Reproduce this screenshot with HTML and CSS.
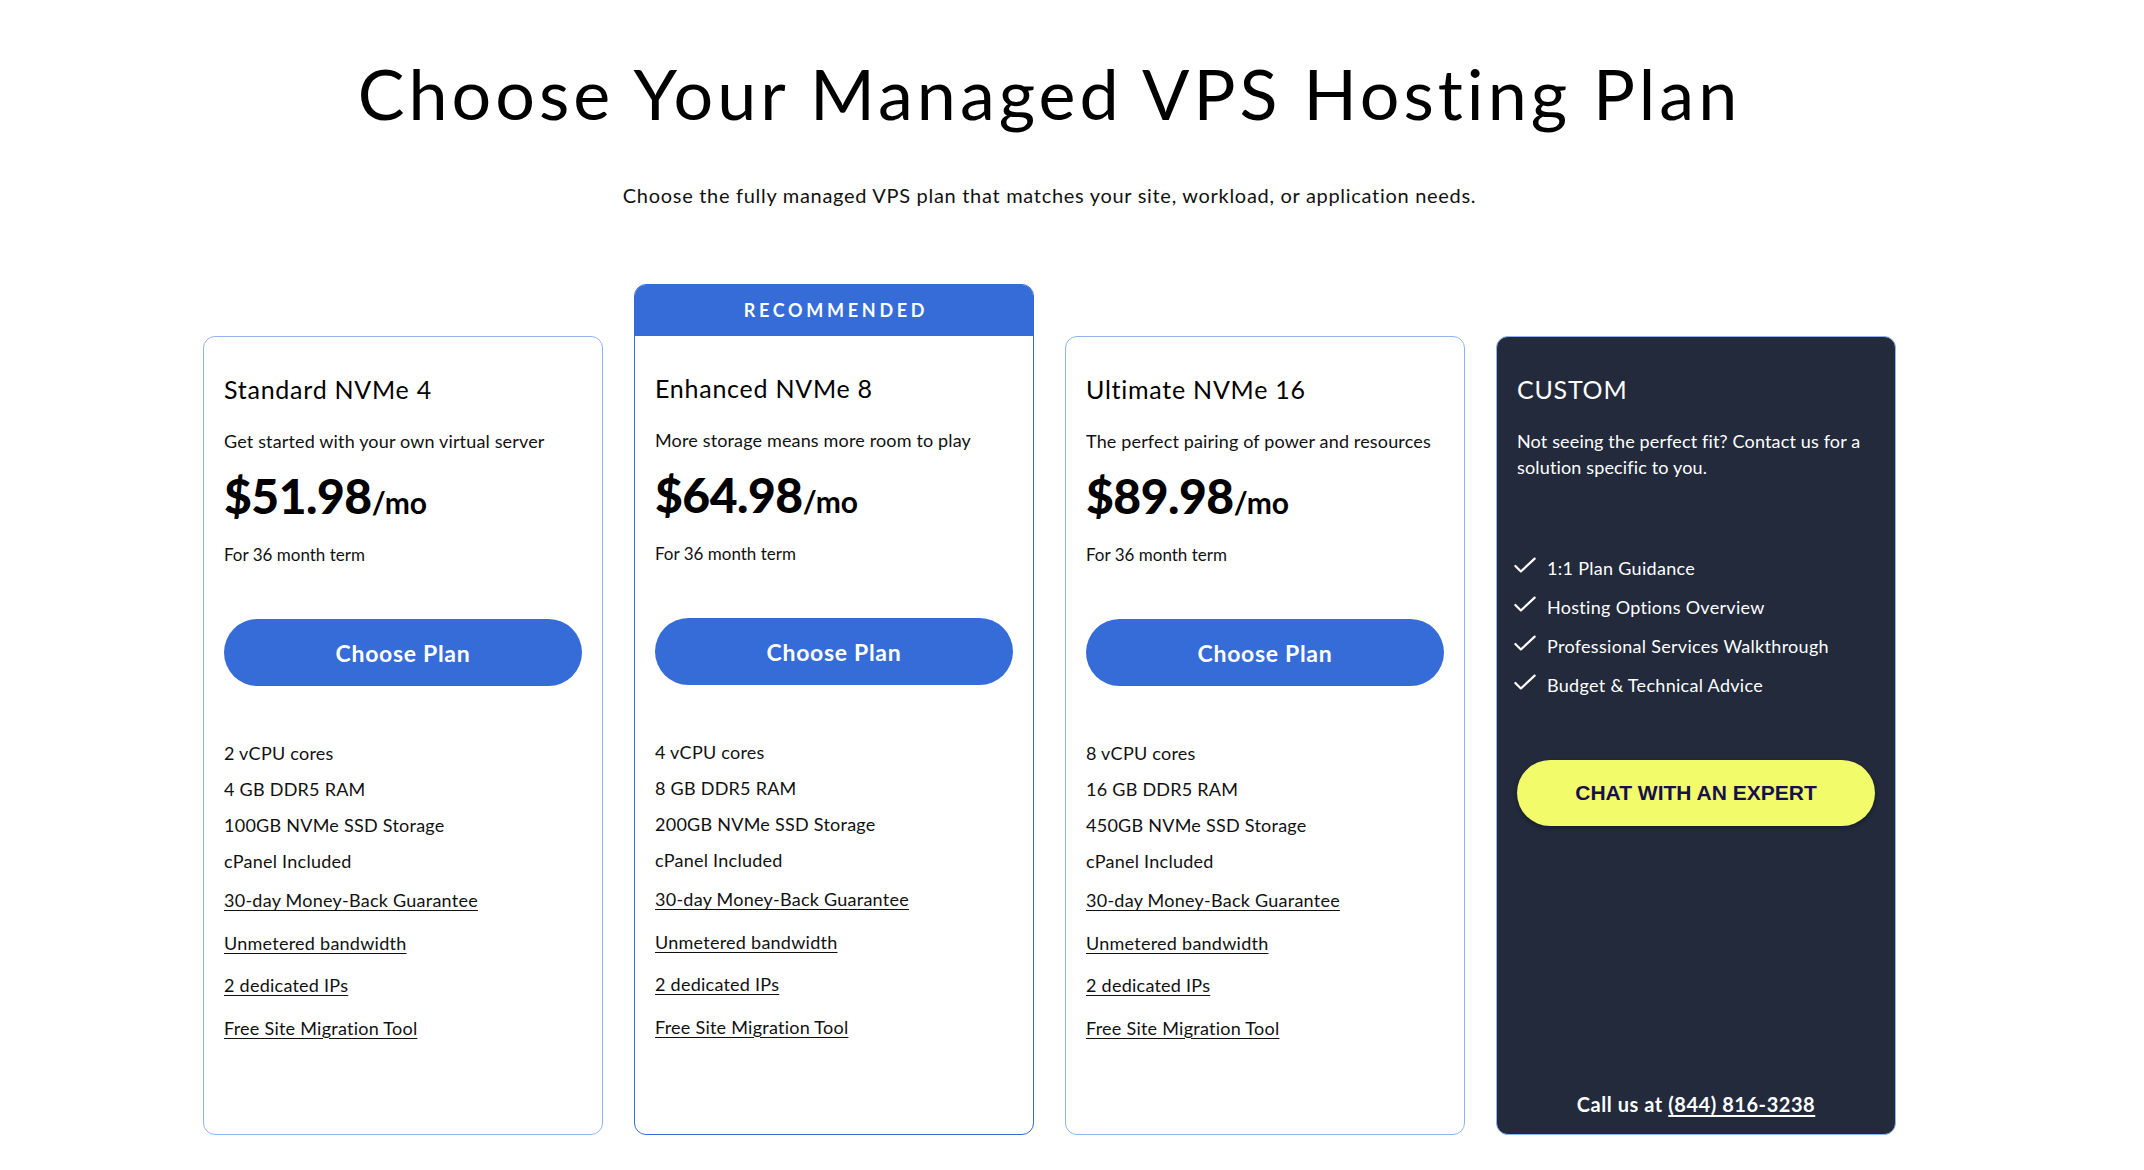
FILE: index.html
```html
<!DOCTYPE html>
<html lang="en">
<head>
<meta charset="utf-8">
<title>Choose Your Managed VPS Hosting Plan</title>
<link rel="stylesheet" href="styles.css">
</head>
<body>
<main class="page">
  <header class="intro">
    <h1 class="intro-title">Choose Your Managed VPS Hosting Plan</h1>
    <p class="intro-sub">Choose the fully managed VPS plan that matches your site, workload, or application needs.</p>
  </header>

  <section class="plans">
    <article class="card">
      <div class="card-body">
        <h2 class="plan-name">Standard NVMe 4</h2>
        <p class="plan-desc">Get started with your own virtual server</p>
        <p class="plan-price"><span class="amount">$51.98</span><span class="per">/mo</span></p>
        <p class="plan-term">For 36 month term</p>
        <a class="btn-plan" href="#">Choose Plan</a>
        <ul class="features">
          <li>2 vCPU cores</li>
          <li>4 GB DDR5 RAM</li>
          <li>100GB NVMe SSD Storage</li>
          <li>cPanel Included</li>
          <li class="link"><a href="#">30-day Money-Back Guarantee</a></li>
          <li class="link"><a href="#">Unmetered bandwidth</a></li>
          <li class="link"><a href="#">2 dedicated IPs</a></li>
          <li class="link"><a href="#">Free Site Migration Tool</a></li>
        </ul>
      </div>
    </article>

    <article class="card card-featured">
      <div class="badge">RECOMMENDED</div>
      <div class="card-body">
        <h2 class="plan-name">Enhanced NVMe 8</h2>
        <p class="plan-desc">More storage means more room to play</p>
        <p class="plan-price"><span class="amount">$64.98</span><span class="per">/mo</span></p>
        <p class="plan-term">For 36 month term</p>
        <a class="btn-plan" href="#">Choose Plan</a>
        <ul class="features">
          <li>4 vCPU cores</li>
          <li>8 GB DDR5 RAM</li>
          <li>200GB NVMe SSD Storage</li>
          <li>cPanel Included</li>
          <li class="link"><a href="#">30-day Money-Back Guarantee</a></li>
          <li class="link"><a href="#">Unmetered bandwidth</a></li>
          <li class="link"><a href="#">2 dedicated IPs</a></li>
          <li class="link"><a href="#">Free Site Migration Tool</a></li>
        </ul>
      </div>
    </article>

    <article class="card">
      <div class="card-body">
        <h2 class="plan-name">Ultimate NVMe 16</h2>
        <p class="plan-desc">The perfect pairing of power and resources</p>
        <p class="plan-price"><span class="amount">$89.98</span><span class="per">/mo</span></p>
        <p class="plan-term">For 36 month term</p>
        <a class="btn-plan" href="#">Choose Plan</a>
        <ul class="features">
          <li>8 vCPU cores</li>
          <li>16 GB DDR5 RAM</li>
          <li>450GB NVMe SSD Storage</li>
          <li>cPanel Included</li>
          <li class="link"><a href="#">30-day Money-Back Guarantee</a></li>
          <li class="link"><a href="#">Unmetered bandwidth</a></li>
          <li class="link"><a href="#">2 dedicated IPs</a></li>
          <li class="link"><a href="#">Free Site Migration Tool</a></li>
        </ul>
      </div>
    </article>

    <article class="card card-custom">
      <div class="card-body">
        <h2 class="plan-name">CUSTOM</h2>
        <p class="plan-desc">Not seeing the perfect fit? Contact us for a solution specific to you.</p>
        <ul class="checks">
          <li><svg class="check" viewBox="0 0 24 18" aria-hidden="true"><path d="M1.5 9.5 L7.5 15.5 L22.5 1.5"/></svg>1:1 Plan Guidance</li>
          <li><svg class="check" viewBox="0 0 24 18" aria-hidden="true"><path d="M1.5 9.5 L7.5 15.5 L22.5 1.5"/></svg>Hosting Options Overview</li>
          <li><svg class="check" viewBox="0 0 24 18" aria-hidden="true"><path d="M1.5 9.5 L7.5 15.5 L22.5 1.5"/></svg>Professional Services Walkthrough</li>
          <li><svg class="check" viewBox="0 0 24 18" aria-hidden="true"><path d="M1.5 9.5 L7.5 15.5 L22.5 1.5"/></svg>Budget &amp; Technical Advice</li>
        </ul>
        <a class="btn-chat" href="#">CHAT WITH AN EXPERT</a>
        <p class="call">Call us at <a href="#">(844) 816-3238</a></p>
      </div>
    </article>
  </section>
</main>
</body>
</html>
```
FILE: styles.css
```css
* { box-sizing: border-box; }

html, body {
  margin: 0;
  padding: 0;
  background: #ffffff;
}

body {
  font-family: "Lato", "Liberation Sans", sans-serif;
  color: #111111;
}

.page {
  width: 1693px;
  margin-left: 203px;
}

.intro {
  text-align: center;
  padding-top: 51px;
}

.intro-title {
  margin: 0;
  font-size: 70px;
  line-height: 84px;
  font-weight: 400;
  letter-spacing: 4px;
  color: #000;
}

.intro-sub {
  margin: 46px 0 0;
  font-size: 20px;
  line-height: 28px;
  letter-spacing: 0.7px;
  color: #111;
}

.plans {
  display: flex;
  align-items: stretch;
  gap: 31px;
  margin-top: 75px;
}

.card {
  width: 400px;
  flex: 0 0 400px;
  display: flex;
  flex-direction: column;
  border: 1px solid #8fb4f2;
  border-radius: 12px;
  background: #fff;
  overflow: hidden;
}

.card:not(.card-featured) {
  margin-top: 52px;
}

.card-featured {
  border-color: #356cd8;
}

.badge {
  height: 51px;
  background: #356cd8;
  color: #fff;
  text-align: center;
  font-size: 18px;
  font-weight: 700;
  letter-spacing: 3.7px;
  line-height: 51px;
  padding-left: 4px;
}

.card-body {
  flex: 1;
  padding: 37px 20px 85px;
  display: flex;
  flex-direction: column;
}

.plan-name {
  margin: 0;
  font-size: 25px;
  line-height: 30px;
  font-weight: 400;
  letter-spacing: 0.75px;
  color: #000;
}

.plan-desc {
  margin: 24px 0 0;
  font-size: 18px;
  line-height: 26px;
  letter-spacing: 0.15px;
}

.plan-price {
  margin: 14px 0 0;
  font-size: 48px;
  line-height: 56px;
  color: #000;
  white-space: nowrap;
}

.amount {
  font-size: 48px;
  font-weight: 900;
  letter-spacing: -0.5px;
}

.per {
  font-size: 30px;
  line-height: 1;
  font-weight: 700;
}

.plan-term {
  margin: 19px 0 0;
  font-size: 17px;
  line-height: 24px;
}

.btn-plan {
  display: flex;
  align-items: center;
  justify-content: center;
  margin-top: 52px;
  height: 67px;
  border-radius: 34px;
  background: #356cd8;
  color: #fff;
  font-size: 23px;
  font-weight: 700;
  letter-spacing: 0.7px;
  text-decoration: none;
}

.features {
  list-style: none;
  margin: 49px 0 0;
  padding: 0;
  font-size: 18px;
  letter-spacing: 0.25px;
}

.features li {
  line-height: 36px;
}

.features li.link {
  line-height: 42.5px;
}

.features a {
  color: #111;
  text-decoration: underline;
  text-underline-offset: 3px;
  text-decoration-thickness: 1px;
}

.card-custom {
  background: #222a3b;
  border-color: #8fb4f2;
}

.card-custom .card-body {
  padding-bottom: 18px;
}

.card-custom .plan-name,
.card-custom .plan-desc {
  color: #fff;
}

.checks {
  list-style: none;
  margin: 69px 0 0;
  padding: 0;
  color: #fff;
  font-size: 18px;
  letter-spacing: 0.3px;
}

.checks li {
  display: flex;
  align-items: center;
  line-height: 39px;
}

.check {
  flex: 0 0 22px;
  width: 22px;
  height: 17px;
  margin: -6px 11px 0 -3px;
  fill: none;
  stroke: #fff;
  stroke-width: 2.4;
  stroke-linecap: round;
  stroke-linejoin: round;
}

.btn-chat {
  display: flex;
  align-items: center;
  justify-content: center;
  margin-top: 55px;
  height: 66px;
  border-radius: 33px;
  background: #f2fb6a;
  color: #16104d;
  font-family: "Liberation Sans", Arial, sans-serif;
  font-size: 21px;
  font-weight: 700;
  text-decoration: none;
  box-shadow: 0 2px 4px rgba(0, 0, 0, 0.35);
}

.call {
  margin: auto 0 0;
  text-align: center;
  font-size: 20px;
  line-height: 24px;
  font-weight: 700;
  letter-spacing: 0.55px;
  color: #fff;
}

.call a {
  color: #fff;
  text-decoration: underline;
  text-underline-offset: 3px;
}
```
